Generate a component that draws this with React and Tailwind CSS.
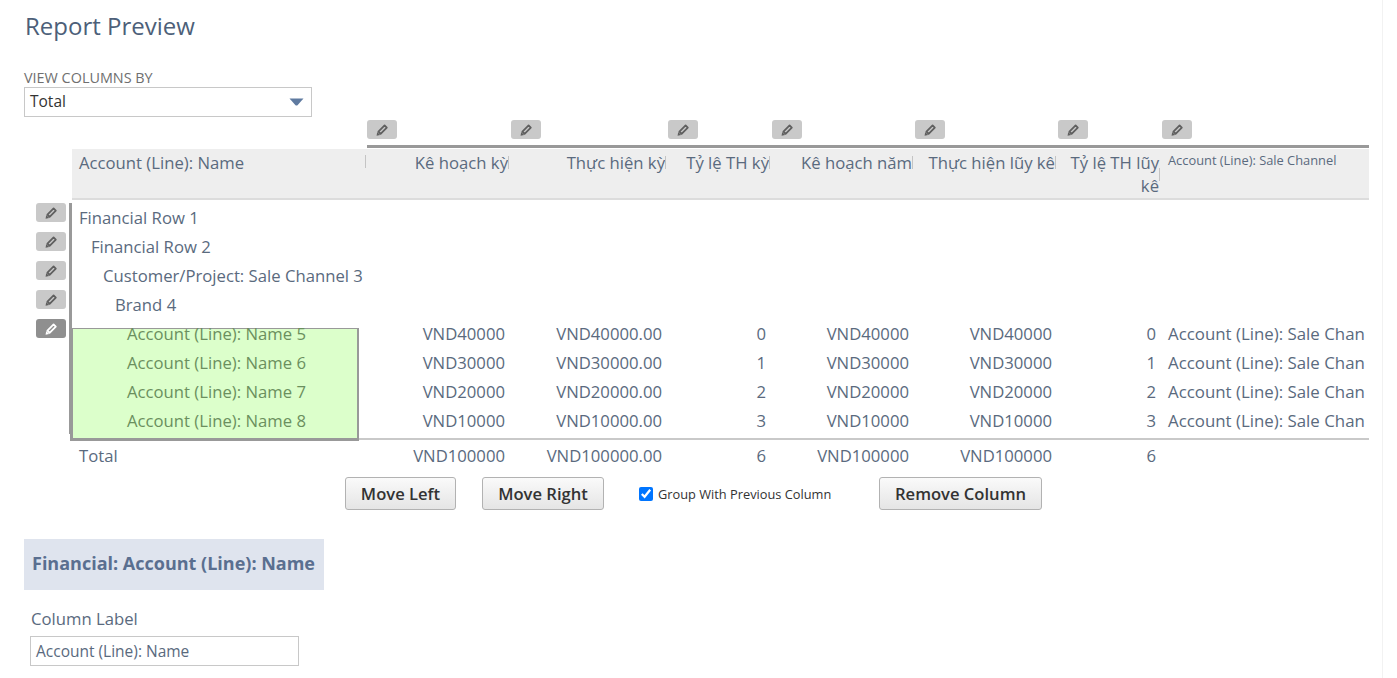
import React from 'react';

const columns = [
  { width: 'w-[143px]', label: 'Kê hoạch kỳ', tick: 'mt-[5px]' },
  { width: 'w-[157px]', label: 'Thực hiện kỳ', tick: 'mt-[5px]' },
  { width: 'w-[104px]', label: 'Tỷ lệ TH kỳ', tick: 'mt-[5px]' },
  { width: 'w-[143px]', label: 'Kê hoạch năm', tick: 'mt-[5px]' },
  { width: 'w-[143px]', label: 'Thực hiện lũy kê', tick: 'mt-[5px]' },
  { width: 'w-[104px]', label: 'Tỷ lệ TH lũy kê', tick: 'mt-[17px]' },
];

const rows = [
  { name: 'Account (Line): Name 5', values: ['VND40000', 'VND40000.00', '0', 'VND40000', 'VND40000', '0'] },
  { name: 'Account (Line): Name 6', values: ['VND30000', 'VND30000.00', '1', 'VND30000', 'VND30000', '1'] },
  { name: 'Account (Line): Name 7', values: ['VND20000', 'VND20000.00', '2', 'VND20000', 'VND20000', '2'] },
  { name: 'Account (Line): Name 8', values: ['VND10000', 'VND10000.00', '3', 'VND10000', 'VND10000', '3'] },
];

const totals = ['VND100000', 'VND100000.00', '6', 'VND100000', 'VND100000', '6'];

const EditButton = ({ active }) => (
  <div
    className={`w-[30px] h-[19px] rounded-[3px] flex items-center justify-center ${
      active ? 'bg-[#8f8f8f] text-white' : 'bg-[#c9c9c9] text-[#5f5f5f]'
    }`}
  >
    <svg width="16" height="16" viewBox="0 0 16 16" fill="none">
      <path d="M10.6 3.4 12.8 5.6 6.6 11.8 4.4 9.6Z" stroke="currentColor" strokeWidth="1.8" strokeLinejoin="round" />
      <path d="M3.2 10 6.2 13 2.6 13.8Z" fill="currentColor" />
    </svg>
  </div>
);

const Btn = ({ children, className = '' }) => (
  <button className={`h-[33px] pt-[1px] rounded-[3px] border border-[#b2b2b2] bg-gradient-to-b from-[#fafafa] to-[#e5e5e5] text-[16.6px] font-semibold text-[#333] ${className}`}>
    {children}
  </button>
);

const App = () => {
  return (
    <div className="flex w-[1397px] h-[678px] overflow-hidden bg-white font-['Open_Sans',sans-serif] text-[#5a6a7e]">
      <div className="w-[1383px] shrink-0 border-r border-[#f2f2f2] pl-[24px] pr-[13px]">
        <h1 className="pt-[10px] h-[69px] pl-[1px] text-[24px] leading-[32px] text-[#4d5f79]">Report Preview</h1>

        <div className="text-[14.4px] leading-[18px] text-[#6f6f6f]">VIEW COLUMNS BY</div>
        <div className="w-[288px] h-[30px] border border-[#c8c8c8] flex items-center justify-between pl-[5px] pr-[7px] text-[15.5px] text-[#333]">
          <span className="-mt-[1px]">Total</span>
          <svg width="15" height="8" viewBox="0 0 15 8">
            <path d="M0.5 0.5H14.5L8.5 7.2Q7.5 8 6.5 7.2Z" fill="#5f7aa0" />
          </svg>
        </div>

        {/* column edit buttons */}
        <div className="flex ml-[343px] mt-[3px] h-[29px]">
          <div className="w-[144px]">
            <EditButton />
          </div>
          {columns.slice(1).map((col) => (
            <div key={col.label} className={col.width}>
              <EditButton />
            </div>
          ))}
          <EditButton />
        </div>

        <div className="relative ml-[48px]">
          {/* header */}
          <div className="relative flex h-[51px] border-b-2 border-[#dcdcdc] bg-[#eeeeee] text-[16.7px] leading-[23px]">
            <div className="w-[295px] flex pl-[7px] pt-[2px]">
              <span className="flex-1">Account (Line): Name</span>
              <div className="w-px h-[13px] mt-[4px] mr-[1px] bg-[#c4c4c4]" />
            </div>
            {columns.map((col) => (
              <div key={col.label} className={`${col.width} flex pt-[2px] pl-[8px] pr-[1px] text-right`}>
                <span className="flex-1">{col.label}</span>
                <div className={`w-px h-[13px] shrink-0 bg-[#c4c4c4] ${col.tick}`} />
              </div>
            ))}
            <div className="flex-1 pl-[7px] pt-[2px] text-[12.85px] leading-[18px]">Account (Line): Sale Channel</div>
            <div className="absolute left-[295px] right-0 -top-[4px] h-[3px] bg-[#999999]" />
          </div>

          {/* left edit buttons */}
          <div className="absolute -left-[36px] top-[54px] flex flex-col gap-[10px]">
            <EditButton />
            <EditButton />
            <EditButton />
            <EditButton />
            <EditButton active />
          </div>

          <div className="absolute -left-[3px] top-[54px] w-[3px] h-[231px] bg-[#999999]" />

          <div className="text-[16.7px] leading-[29px] pt-[3px]">
            <div className="pl-[7px] h-[29px]">Financial Row 1</div>
            <div className="pl-[19px] h-[29px]">Financial Row 2</div>
            <div className="pl-[31px] h-[29px]">Customer/Project: Sale Channel 3</div>
            <div className="pl-[43px] h-[29px]">Brand 4</div>
            {rows.map((row) => (
              <div key={row.name} className="flex h-[29px]">
                <div className="w-[295px] pl-[55px] relative z-10 text-[#6b8f5e]">{row.name}</div>
                {columns.map((col, j) => (
                  <div key={col.label} className={`${col.width} pr-[5px] text-right`}>
                    {row.values[j]}
                  </div>
                ))}
                <div className="flex-1 pl-[7px] whitespace-nowrap text-[16.85px]">Account (Line): Sale Chan</div>
              </div>
            ))}
            <div className="flex h-[35px] mt-[3px] border-t-2 border-[#c9c9c9] pt-[1px]">
              <div className="w-[295px] pl-[7px]">Total</div>
              {columns.map((col, j) => (
                <div key={col.label} className={`${col.width} pr-[5px] text-right`}>
                  {totals[j]}
                </div>
              ))}
            </div>
          </div>

          {/* selected column highlight */}
          <div className="absolute -left-[2px] top-[179px] w-[289px] h-[113px] bg-[#dcffcb] border-t border-r-[2px] border-b-[3px] border-l-[3px] border-[#999999]" />
        </div>

        <div className="flex items-center mt-[4px] ml-[321px] h-[33px]">
          <Btn className="w-[111px]">Move Left</Btn>
          <Btn className="w-[122px] ml-[26px]">Move Right</Btn>
          <label className="ml-[35px] w-[240px] flex items-center text-[12.8px] text-[#333]">
            <input type="checkbox" defaultChecked className="w-[14px] h-[14px] mr-[5px] accent-[#0075ff]" />
            <span className="pt-[2px]">Group With Previous Column</span>
          </label>
          <Btn className="w-[163px]">Remove Column</Btn>
        </div>

        <div className="mt-[29px] w-[300px] h-[51px] bg-[#dfe4ee] flex items-center pl-[8px] pb-[3px] text-[18px] font-bold text-[#5a6f90]">
          Financial: Account (Line): Name
        </div>
        <div className="mt-[18px] ml-[7px] text-[16.7px] leading-[22px]">Column Label</div>
        <div className="mt-[6px] ml-[6px] w-[269px] h-[30px] border border-[#c8c8c8] flex items-center pl-[5px] pt-[1px] text-[15.5px]">
          Account (Line): Name
        </div>
      </div>
    </div>
  );
};

export default App;
